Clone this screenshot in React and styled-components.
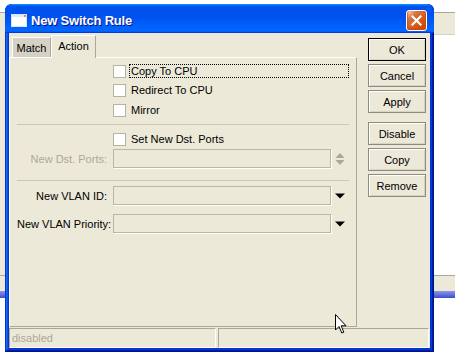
import styled, { createGlobalStyle } from "styled-components";

const GlobalStyle = createGlobalStyle`
  body {
    margin: 0;
    background: #fff;
    font-family: "Liberation Sans", Arial, sans-serif;
  }
`;

const Desktop = styled.div`
  position: relative;
  width: 455px;
  height: 363px;
  overflow: hidden;
  background:
    linear-gradient(#ece9d8, #ece9d8) 0 13px / 5px 262px no-repeat,
    linear-gradient(to bottom, #aca899 0 1px, #ece9d8 1px 22px, #d6d3c4 22px 23px) 0 12px / 100% 23px no-repeat,
    linear-gradient(to bottom, #aca899 0 1px, #ece9d8 1px 16px, #8e97e4 16px, #3a4ed0 23px) 0 275px / 100% 23px no-repeat,
    #fff;
`;

const Window = styled.div`
  position: absolute;
  left: 5px;
  top: 4px;
  width: 429px;
  height: 348px;
  display: flex;
  flex-direction: column;
  border-radius: 7px 7px 0 0;
  overflow: hidden;
  background: #0831d9;
  box-shadow: inset -1px -1px #00138c, inset 1px 1px #0831d9,
    inset -2px -2px #001ea0, inset 2px 2px #166aee,
    inset -3px -3px #003bda, inset 3px 3px #0855dd;
`;

const TitleBar = styled.div`
  height: 29px;
  flex: none;
  box-sizing: border-box;
  display: flex;
  align-items: center;
  gap: 4px;
  padding: 4px 7px 0 6px;
  background: linear-gradient(
    180deg,
    #0997ff,
    #0053ee 8%,
    #0050ee 40%,
    #0066ff 88%,
    #0066ff 93%,
    #005bff 95%,
    #003dd7 96%,
    #003dd7
  );
`;

const TitleText = styled.span`
  flex: 1;
  color: #fff;
  font-weight: bold;
  font-size: 13px;
  letter-spacing: -0.2px;
  text-shadow: 1px 1px #0f1089;
`;

const CloseButton = styled.div`
  width: 21px;
  height: 21px;
  box-sizing: border-box;
  border: 1px solid #fff;
  border-radius: 3px;
  display: flex;
  align-items: center;
  justify-content: center;
  background: radial-gradient(circle at 90% 90%, #cc4600 0%, #dc6527 55%, #cd7546 70%, #ffccb2 90%, #fff 100%);
  box-shadow: inset 0 -1px 2px 1px #da4600;
`;

const Client = styled.div`
  flex: 1;
  margin: 0 4px 4px;
  display: flex;
  flex-direction: column;
  background: #ece9d8;
  font-size: 11px;
  color: #000;
`;

const Main = styled.div`
  height: 294px;
  display: flex;
`;

const TabArea = styled.div`
  width: 348px;
  display: flex;
  flex-direction: column;
`;

const TabStrip = styled.div`
  height: 24px;
  display: flex;
  align-items: flex-end;
  padding-left: 3px;
`;

const Tab = styled.div`
  position: relative;
  z-index: 1;
  box-sizing: border-box;
  width: ${(p) => (p.$active ? 45 : 39)}px;
  height: ${(p) => (p.$active ? 23 : 20)}px;
  margin-bottom: ${(p) => (p.$active ? -1 : 0)}px;
  display: flex;
  align-items: center;
  justify-content: center;
  padding-bottom: ${(p) => (p.$active ? 3 : 0)}px;
  background: ${(p) => (p.$active ? "#ece9d8" : "#d5d2c5")};
  border-top: 1px solid #fff;
  border-left: 1px solid #fff;
  border-right: 1px solid #aca899;
`;

const Panel = styled.div`
  flex: 1;
  box-sizing: border-box;
  border-top: 1px solid #fff;
  border-left: 1px solid #fff;
  border-right: 1px solid #aca899;
  border-bottom: 1px solid #aca899;
  padding-left: 7px;
  padding-top: 6px;
`;

const FormRow = styled.div`
  display: grid;
  grid-template-columns: 96px 218px 18px;
  align-items: center;
  height: ${(p) => p.$h || 19}px;
  margin-top: ${(p) => p.$mt || 0}px;
`;

const Label = styled.span`
  text-align: right;
  padding-right: 6px;
  white-space: nowrap;
  color: ${(p) => (p.$disabled ? "#aca899" : "#000")};
`;

const CheckWrap = styled.div`
  grid-column: 2 / span 2;
  display: flex;
  align-items: center;
  gap: 3px;
`;

const Box = styled.span`
  width: 13px;
  height: 13px;
  box-sizing: border-box;
  border: 1px solid #b7b3a1;
  background: #fff;
  flex: none;
`;

const CheckText = styled.span`
  flex: 1;
  height: 14px;
  box-sizing: border-box;
  line-height: 12px;
  padding: 0 1px;
  border: 1px dotted ${(p) => (p.$focus ? "#000" : "transparent")};
`;

const Field = styled.div`
  height: 19px;
  box-sizing: border-box;
  border: 1px solid #bab7a4;
  box-shadow: 1px 1px 0 #fff;
  background: #ece9d8;
`;

const ArrowCell = styled.div`
  display: flex;
  justify-content: center;
  align-items: center;
`;

const Separator = styled.div`
  width: 332px;
  height: 1px;
  background: #cac7b6;
  margin-top: ${(p) => p.$mt}px;
`;

const ButtonColumn = styled.div`
  margin-left: 11px;
  padding-top: 5px;
  display: flex;
  flex-direction: column;
  gap: 3px;
`;

const Button = styled.div`
  width: 58px;
  height: 23px;
  box-sizing: border-box;
  display: flex;
  align-items: center;
  justify-content: center;
  border: 1px solid ${(p) => (p.$default ? "#000" : "#8f8b7c")};
  box-shadow: inset 1px 1px #fff, inset -1px -1px #d8d4c4;
  background: #ece9d8;
  margin-top: ${(p) => p.$mt || 0}px;
`;

const StatusBar = styled.div`
  height: 20px;
  margin-top: 1px;
  display: flex;
  gap: 2px;
  padding-right: 1px;
`;

const StatusCell = styled.div`
  box-sizing: border-box;
  width: ${(p) => (p.$w ? `${p.$w}px` : "auto")};
  flex: ${(p) => (p.$w ? "none" : 1)};
  border-top: 1px solid #aca899;
  border-left: 1px solid #aca899;
  border-bottom: 1px solid #fff;
  border-right: 1px solid #fff;
  padding: 3px 0 0 2px;
  color: #aca899;
`;

const Pointer = styled.svg`
  position: absolute;
  left: 335px;
  top: 314px;
`;

const WindowIcon = () => (
  <svg width="16" height="13" viewBox="0 0 16 13">
    <rect x="0.5" y="0.5" width="15" height="12" fill="#fff" stroke="#d8e4f8" />
    <rect x="1" y="1" width="14" height="2" fill="#dfe9fb" />
    <rect x="13" y="1" width="2" height="2" fill="#f08a3c" />
  </svg>
);

const CloseIcon = () => (
  <svg width="11" height="11" viewBox="0 0 11 11">
    <path d="M1.5 1.5 L9.5 9.5 M9.5 1.5 L1.5 9.5" stroke="#fff" strokeWidth="2.2" strokeLinecap="square" />
  </svg>
);

const Spinner = () => (
  <svg width="10" height="14" viewBox="0 0 10 14">
    <path d="M5 1 L9.5 6 H0.5 Z" fill="#aca899" />
    <path d="M0.5 8 H9.5 L5 13 Z" fill="#aca899" />
  </svg>
);

const DropArrow = () => (
  <svg width="10" height="6" viewBox="0 0 10 6">
    <path d="M0 0.5 H10 L5 5.5 Z" fill="#000" />
  </svg>
);

const CheckRow = ({ label, focus, mt }) => (
  <FormRow $h={14} $mt={mt}>
    <CheckWrap>
      <Box />
      <CheckText $focus={focus}>{label}</CheckText>
    </CheckWrap>
  </FormRow>
);

const FieldRow = ({ label, disabled, mt, arrow }) => (
  <FormRow $mt={mt}>
    <Label $disabled={disabled}>{label}</Label>
    <Field />
    <ArrowCell>{arrow}</ArrowCell>
  </FormRow>
);

export default function App() {
  return (
    <Desktop>
      <GlobalStyle />
      <Window>
        <TitleBar>
          <WindowIcon />
          <TitleText>New Switch Rule</TitleText>
          <CloseButton>
            <CloseIcon />
          </CloseButton>
        </TitleBar>
        <Client>
          <Main>
            <TabArea>
              <TabStrip>
                <Tab>Match</Tab>
                <Tab $active>Action</Tab>
              </TabStrip>
              <Panel>
                <CheckRow label="Copy To CPU" focus />
                <CheckRow label="Redirect To CPU" mt={5} />
                <CheckRow label="Mirror" mt={6} />
                <Separator $mt={7} />
                <CheckRow label="Set New Dst. Ports" mt={7} />
                <FieldRow label="New Dst. Ports:" disabled mt={3} arrow={<Spinner />} />
                <Separator $mt={12} />
                <FieldRow label="New VLAN ID:" mt={5} arrow={<DropArrow />} />
                <FieldRow label="New VLAN Priority:" mt={9} arrow={<DropArrow />} />
              </Panel>
            </TabArea>
            <ButtonColumn>
              <Button $default>OK</Button>
              <Button>Cancel</Button>
              <Button>Apply</Button>
              <Button $mt={6}>Disable</Button>
              <Button>Copy</Button>
              <Button>Remove</Button>
            </ButtonColumn>
          </Main>
          <StatusBar>
            <StatusCell $w={207}>disabled</StatusCell>
            <StatusCell />
          </StatusBar>
        </Client>
      </Window>
      <Pointer width="12" height="20" viewBox="0 0 12 20">
        <path d="M0.5 0.5 V16 L4 12.5 L6.8 19 L8.8 18.2 L6.2 11.8 H11 Z" fill="#fff" stroke="#000" strokeWidth="1" />
      </Pointer>
    </Desktop>
  );
}
